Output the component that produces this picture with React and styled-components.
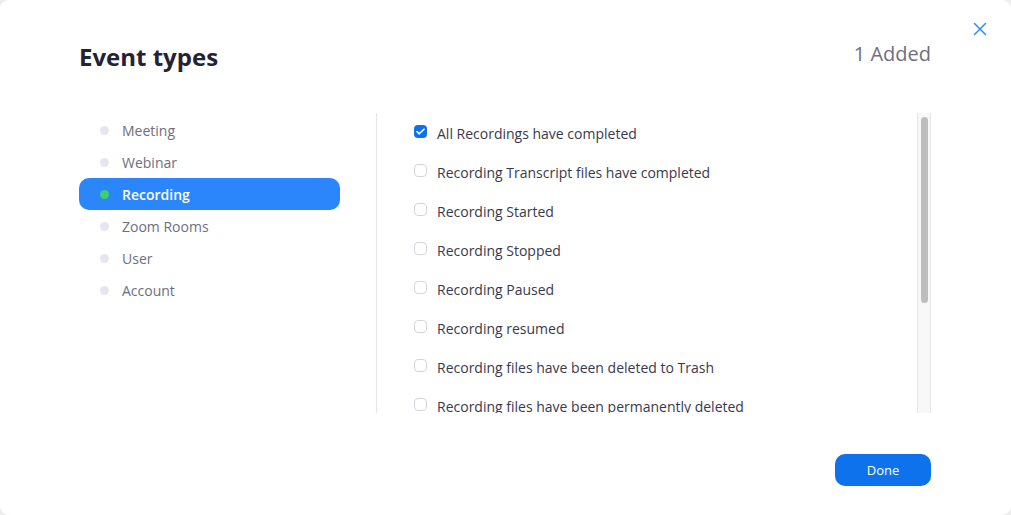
import React, { useState } from "react";
import styled, { createGlobalStyle } from "styled-components";

const GlobalStyle = createGlobalStyle`
  html, body {
    margin: 0;
    padding: 0;
    background: #ededed;
  }
  * {
    box-sizing: border-box;
  }
`;

const categories = ["Meeting", "Webinar", "Recording", "Zoom Rooms", "User", "Account"];

const recordingEvents = [
  "All Recordings have completed",
  "Recording Transcript files have completed",
  "Recording Started",
  "Recording Stopped",
  "Recording Paused",
  "Recording resumed",
  "Recording files have been deleted to Trash",
  "Recording files have been permanently deleted",
];

const EventTypes = () => {
  const [active, setActive] = useState("Recording");
  const [checked, setChecked] = useState({ 0: true });
  const count = Object.values(checked).filter(Boolean).length;

  return (
    <Modal>
      <CloseButton aria-label="Close">
        <svg width="14" height="14" viewBox="0 0 14 14">
          <path d="M1.5 1.5 L12.5 12.5 M12.5 1.5 L1.5 12.5" stroke="#2d8cff" strokeWidth="1.5" strokeLinecap="round" />
        </svg>
      </CloseButton>
      <Header>
        <Title>Event types</Title>
        <Added>{count} Added</Added>
      </Header>
      <Body>
        <Nav>
          {categories.map((c) => (
            <NavItem key={c} $active={c === active} onClick={() => setActive(c)}>
              <Dot $active={c === active} />
              {c}
            </NavItem>
          ))}
        </Nav>
        <ListPane>
          <EventList>
            {recordingEvents.map((e, i) => (
              <EventRow key={e} onClick={() => setChecked({ ...checked, [i]: !checked[i] })}>
                <Check $checked={!!checked[i]}>
                  {checked[i] && (
                    <svg width="9" height="7" viewBox="0 0 9 7">
                      <path d="M1 3.6 L3.3 5.8 L8 1.2" stroke="#fff" strokeWidth="1.6" fill="none" strokeLinecap="round" strokeLinejoin="round" />
                    </svg>
                  )}
                </Check>
                {e}
              </EventRow>
            ))}
          </EventList>
          <ScrollTrack>
            <ScrollThumb />
          </ScrollTrack>
        </ListPane>
      </Body>
      <Footer>
        <DoneButton>Done</DoneButton>
      </Footer>
    </Modal>
  );
};

const Modal = styled.div`
  position: relative;
  width: 1011px;
  height: 515px;
  background: #fff;
  border-radius: 9px;
  font-family: "Open Sans", "Liberation Sans", sans-serif;
  padding: 0 80px 0 79px;
  display: flex;
  flex-direction: column;
`;

const CloseButton = styled.button`
  position: absolute;
  top: 22px;
  right: 24px;
  width: 14px;
  height: 14px;
  padding: 0;
  border: none;
  background: none;
  display: flex;
  cursor: pointer;
`;

const Header = styled.div`
  display: flex;
  justify-content: space-between;
  align-items: flex-start;
  padding-top: 39px;
  height: 113px;
`;

const Title = styled.h1`
  margin: 0;
  font-size: 24px;
  line-height: 36px;
  font-weight: 700;
  color: #232333;
`;

const Added = styled.div`
  font-size: 20px;
  line-height: 30px;
  color: #6e7080;
`;

const Body = styled.div`
  display: grid;
  grid-template-columns: 261px 1fr;
  column-gap: 36px;
  height: 301px;
`;

const Nav = styled.ul`
  list-style: none;
  margin: 0;
  padding: 1px 0 0;
  display: flex;
  flex-direction: column;
`;

const NavItem = styled.li`
  height: 32px;
  display: flex;
  align-items: center;
  gap: 13px;
  padding-left: 21px;
  border-radius: 10px;
  font-size: 14px;
  font-weight: ${(p) => (p.$active ? 600 : 400)};
  color: ${(p) => (p.$active ? "#fff" : "#6e6e80")};
  background: ${(p) => (p.$active ? "#2b86fb" : "transparent")};
  cursor: pointer;
`;

const Dot = styled.span`
  width: 9px;
  height: 9px;
  border-radius: 50%;
  background: ${(p) => (p.$active ? "#3fcf6d" : "#e6e6ef")};
`;

const ListPane = styled.div`
  display: flex;
  height: 300px;
  border-left: 1px solid #e4e4ee;
`;

const EventList = styled.div`
  flex: 1;
  overflow: hidden;
  padding: 1px 0 0 37px;
`;

const EventRow = styled.label`
  height: 39px;
  display: flex;
  align-items: center;
  gap: 10px;
  font-size: 14px;
  color: #39394d;
  cursor: pointer;
`;

const Check = styled.span`
  width: 13px;
  height: 13px;
  flex: none;
  border-radius: 4px;
  display: flex;
  align-items: center;
  justify-content: center;
  margin-top: -4px;
  background: ${(p) => (p.$checked ? "#0e71eb" : "#fff")};
  border: ${(p) => (p.$checked ? "none" : "1px solid #d4d4de")};
`;

const ScrollTrack = styled.div`
  width: 14px;
  flex: none;
  background: #f8f8f8;
  border-left: 1px solid #e6e6e6;
  border-right: 1px solid #e6e6e6;
  padding: 4px 2px 0 3px;
`;

const ScrollThumb = styled.div`
  height: 186px;
  border-radius: 4px;
  background: #bdbdbd;
`;

const Footer = styled.div`
  display: flex;
  justify-content: flex-end;
  padding-top: 40px;
`;

const DoneButton = styled.button`
  width: 96px;
  height: 32px;
  border: none;
  border-radius: 10px;
  background: #0e72ed;
  color: #fff;
  font-family: "Open Sans", "Liberation Sans", sans-serif;
  font-size: 13px;
  font-weight: 500;
  cursor: pointer;
`;

export default function App() {
  return (
    <>
      <GlobalStyle />
      <EventTypes />
    </>
  );
}
